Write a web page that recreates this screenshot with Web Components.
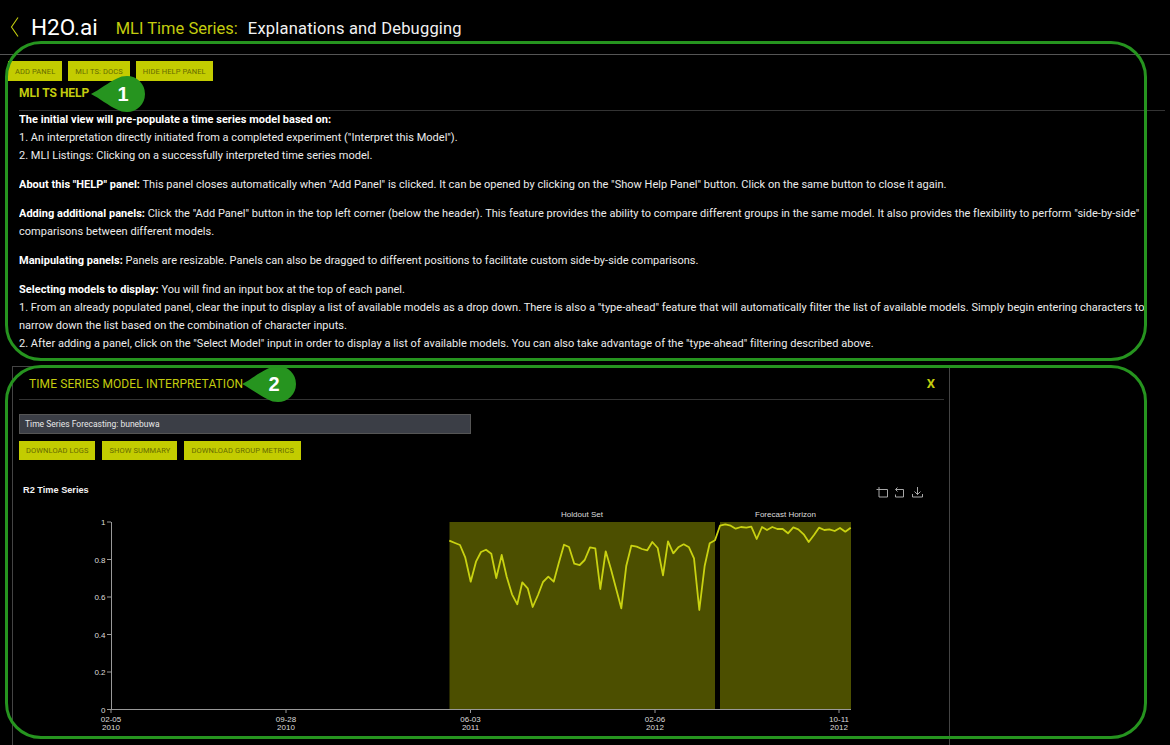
<!DOCTYPE html>
<html><head><meta charset="utf-8"><style>
html,body{margin:0;background:#000;height:745px;overflow:hidden}
body{position:relative;font-family:Roboto,sans-serif;color:#fff}
</style></head><body>
<app-header></app-header>
<main-view></main-view>
<callout-frame style="--x:5px;--y:41px;--w:1142px;--h:320px"></callout-frame>
<callout-frame style="--x:5px;--y:365px;--w:1142px;--h:374px"></callout-frame>
<callout-badge style="--x:90px;--y:76px">1</callout-badge>
<callout-badge style="--x:241px;--y:366px">2</callout-badge>
<script>
const def=(n,html)=>customElements.define(n,class extends HTMLElement{constructor(){super();this.attachShadow({mode:'open'}).innerHTML=html}});
const FONT='Roboto,sans-serif';
def('app-header',`<style>:host{display:flex;align-items:center;box-sizing:border-box;height:55px;border-bottom:1px solid #555;padding:0 0 0 10px;font-family:${FONT}}
svg{display:block;margin-right:12px}.logo{font-size:22.5px;color:#fff;margin-right:18px}
.y{font-size:16.5px;color:#c3cc0e;margin-right:10px;padding-top:2px}.w{font-size:16.5px;color:#f2f2f2;letter-spacing:.2px;padding-top:2px}</style>
<svg width="9" height="20" viewBox="0 0 9 20"><path d="M8 .5 1.5 10 8 19.5" fill="none" stroke="#c3cc0e" stroke-width="1.1"/></svg>
<span class="logo">H2O.ai</span><span class="y">MLI Time Series:</span><span class="w">Explanations and Debugging</span>`);
def('h-button',`<style>:host{display:inline-flex;align-items:center;justify-content:center;box-sizing:border-box;height:var(--bh,19px);padding:0 7px;background:#c3cc00;color:#666b00;font:7.5px ${FONT};letter-spacing:.1px;white-space:nowrap}</style><slot></slot>`);
def('help-panel',`<style>:host{display:block;padding:0 5px 0 19px;font-family:${FONT}}
h2{margin:0;height:30px;box-sizing:border-box;padding-top:5px;font-size:12px;font-weight:700;line-height:15px;color:#c3cc0e;border-bottom:1px solid #333}
.t{font-size:11px;letter-spacing:.02px;line-height:18px;color:#ececec;white-space:nowrap;overflow:hidden;width:1125px}</style>
<h2>MLI TS HELP</h2><div class="t"><slot></slot></div>`);
def('ts-panel',`<style>:host{display:block;box-sizing:border-box;width:938px;height:380px;margin-left:12px;border:solid #444;border-width:1px 1px 0 1px;padding:0 5px 0 6px;font-family:${FONT}}
header{display:flex;justify-content:space-between;align-items:center;box-sizing:border-box;height:33px;border-bottom:1px solid #333;padding:1px 9px 0 10px;color:#c3cc0e;font-size:12px;letter-spacing:.1px}
.x{font-weight:700;font-size:13px}.box{box-sizing:border-box;width:452px;height:20px;margin-top:14px;background:#3b3e46;border:1px solid #555;color:#e8e8e8;font-size:8.5px;line-height:18px;padding-left:5px}
.btns{display:flex;gap:7px;margin-top:7px}</style>
<header><span>TIME SERIES MODEL INTERPRETATION</span><span class="x">X</span></header>
<div class="box">Time Series Forecasting: bunebuwa</div>
<div class="btns"><h-button>DOWNLOAD LOGS</h-button><h-button>SHOW SUMMARY</h-button><h-button>DOWNLOAD GROUP METRICS</h-button></div>
<ts-chart></ts-chart>`);
const pts="28,107 45,114 60,120 76,158 92,230 108,170 123,141 138,134 154,146 169,219 185,150 200,215 216,268 232,298 247,232 263,250 278,306 294,270 309,231 325,215 341,230 356,175 372,119 387,126 403,176 419,180 434,165 450,127 466,130 481,252 497,139 512,190 528,250 544,310 559,182 574,122 590,125 606,132 622,136 637,111 653,129 669,211 684,109 700,145 715,127 731,118 747,127 762,160 778,315 794,182 809,115 825,106 840,62 856,58 872,62 887,71 903,66 919,68 934,65 950,102 966,66 981,75 997,66 1012,72 1028,72 1044,85 1060,67 1075,73 1091,88 1106,111 1122,90 1137,68 1153,75 1168,73 1184,78 1200,69 1216,80 1232,68";
const line=pts.split(' ').map(p=>{const[a,b]=p.split(',');return (440+a/3).toFixed(1)+','+(505+b/3).toFixed(1)}).join(' ');
const yt=[[1,522],[.8,559.5],[.6,597],[.4,634.5],[.2,672],[0,709.5]];
const xt=[[111,'02-05','2010'],[286,'09-28','2010'],[470.5,'06-03','2011'],[655,'02-06','2012'],[839,'10-11','2012']];
def('ts-chart',`<style>:host{display:block;margin-left:-19px}svg{display:block}text{font-family:"Liberation Sans",Arial,sans-serif;fill:#ddd;font-size:8px}</style>
<svg width="930" height="285" viewBox="0 460 930 285">
<text x="23" y="493" style="font-size:9.2px;font-weight:700;fill:#f2f2f2">R2 Time Series</text>
<g fill="none" stroke="#bbb" stroke-width=".9">
<path d="M878.5 489.5h9v7.5h-8.5v-10M876.5 489.5h2"/>
<path d="M896 489.5h7.5V497H895.5v-2.5M895.5 489.5l2-2M895.5 489.5l2 2"/>
<path d="M917.5 487v7.5M914.5 491.5l3 3 3-3M912.5 494v3h10v-3"/>
</g>
<rect x="449.5" y="522" width="265.5" height="187" fill="#4c4f00"/>
<rect x="720" y="522" width="131" height="187" fill="#4c4f00"/>
<text x="582" y="517" text-anchor="middle">Holdout Set</text><text x="785.5" y="517" text-anchor="middle">Forecast Horizon</text>
<polyline points="${line}" fill="none" stroke="#c9d211" stroke-width="1.8" stroke-linejoin="round"/>
<path d="M111.5 522v188M111 709.5H851" stroke="#999" fill="none"/>
${yt.map(([v,y])=>`<path d="M107 ${y}h4" stroke="#999"/><text x="105.5" y="${y+3}" text-anchor="end">${v}</text>`).join('')}
${xt.map(([x,a,b])=>`<path d="M${x} 710v3" stroke="#999"/><text x="${x}" y="722" text-anchor="middle">${a}</text><text x="${x}" y="730" text-anchor="middle">${b}</text>`).join('')}
</svg>`);
def('main-view',`<style>:host{display:block}.top{display:flex;gap:6px;padding:6px 0 0 8px;--bh:20px}
p{margin:0 0 11px}p:last-child{margin-bottom:13px}b{color:#fff;font-weight:700}</style>
<div class="top"><h-button>ADD PANEL</h-button><h-button>MLI TS: DOCS</h-button><h-button>HIDE HELP PANEL</h-button></div>
<help-panel>
<p><b>The initial view will pre-populate a time series model based on:</b><br>1. An interpretation directly initiated from a completed experiment ("Interpret this Model").<br>2. MLI Listings: Clicking on a successfully interpreted time series model.</p>
<p><b>About this "HELP" panel:</b> This panel closes automatically when "Add Panel" is clicked. It can be opened by clicking on the "Show Help Panel" button. Click on the same button to close it again.</p>
<p><b>Adding additional panels:</b> Click the "Add Panel" button in the top left corner (below the header). This feature provides the ability to compare different groups in the same model. It also provides the flexibility to perform "side-by-side"<br>comparisons between different models.</p>
<p><b>Manipulating panels:</b> Panels are resizable. Panels can also be dragged to different positions to facilitate custom side-by-side comparisons.</p>
<p><b>Selecting models to display:</b> You will find an input box at the top of each panel.<br>1. From an already populated panel, clear the input to display a list of available models as a drop down. There is also a "type-ahead" feature that will automatically filter the list of available models. Simply begin entering characters to<br>narrow down the list based on the combination of character inputs.<br>2. After adding a panel, click on the "Select Model" input in order to display a list of available models. You can also take advantage of the "type-ahead" filtering described above.</p>
</help-panel>
<ts-panel></ts-panel>`);
def('callout-frame',`<style>:host{position:absolute;left:var(--x);top:var(--y);width:var(--w);height:var(--h);box-sizing:border-box;border:3.5px solid #26941f;border-radius:36px;pointer-events:none}</style>`);
def('callout-badge',`<style>:host{position:absolute;left:var(--x);top:var(--y);width:55px;height:36px;display:block}
svg{position:absolute;inset:0}span{position:absolute;left:15px;width:36px;top:0;height:36px;text-align:center;font:700 20px/37px "Liberation Sans",Arial,sans-serif;color:#fff}</style>
<svg width="55" height="36" viewBox="0 0 55 36"><path d="M1 18C9 14 19 6 27 2.5 30 .8 33 0 37 0a18 18 0 0 1 0 36c-4 0-7-.8-10-2.5C19 30 9 22 1 18z" fill="#26941f"/></svg><span><slot></slot></span>`);
</script>
</body></html>
